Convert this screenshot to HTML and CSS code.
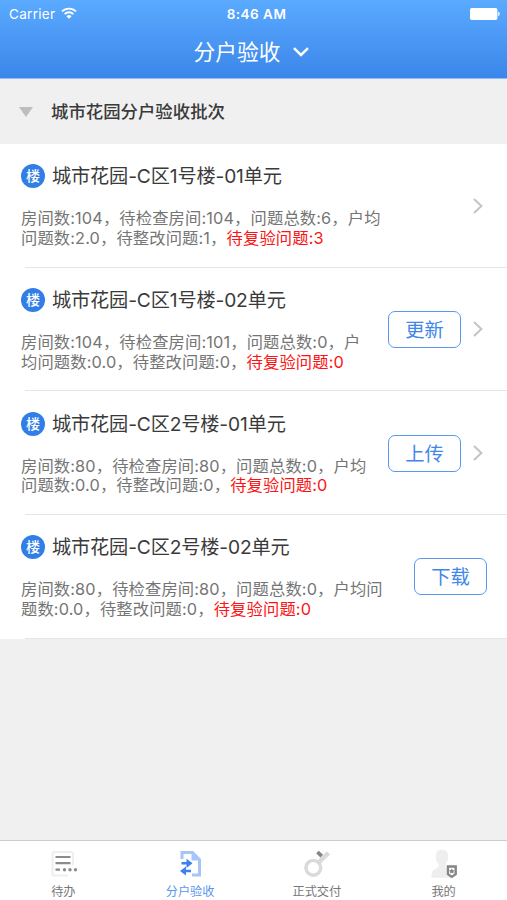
FILE: index.html
```html
<!DOCTYPE html>
<html lang="zh-CN">
<head>
  <meta charset="UTF-8" />
  <meta name="viewport" content="width=device-width, initial-scale=1.0" />
  <title>分户验收</title>
  <link rel="stylesheet" href="styles.css">
</head>
<body>
  <header class="header">
    <div class="status-bar">
      <div class="carrier">
        <span>Carrier</span>
        <svg class="wifi" width="16" height="12" viewBox="0 0 16 12" fill="none" stroke="#fff" stroke-width="1.8">
          <path d="M1 4.4a10 10 0 0 1 14 0" />
          <path d="M3.6 7.1a6.2 6.2 0 0 1 8.8 0" />
          <path d="M8 11.8L5.4 9.2a3.7 3.7 0 0 1 5.2 0z" fill="#fff" stroke="none" />
        </svg>
      </div>
      <span class="time">8:46 AM</span>
      <div class="battery">
        <svg width="30" height="12" viewBox="0 0 30 12" fill="#fff">
          <rect x="0" y="0" width="27.4" height="12" rx="1.8" />
          <path d="M28.2 3.8c2 .6 2 3.8 0 4.4z" />
        </svg>
      </div>
    </div>
    <div class="nav-bar">
      <h1>分户验收</h1>
      <svg width="16" height="10" viewBox="0 0 16 10" fill="none" stroke="#fff" stroke-width="2.5">
        <path d="M1 1.2L8 8l7-6.8" />
      </svg>
    </div>
  </header>

  <main>
    <div class="group">
      <span class="triangle"></span>
      <h2>城市花园分户验收批次</h2>
    </div>

    <ul class="list">
      <li class="item">
        <div class="info">
          <h3><span class="badge">楼</span>城市花园-C区1号楼-01单元</h3>
          <p>房间数:104，待检查房间:104，问题总数:6，户均<br>问题数:2.0，待整改问题:1，<span class="red">待复验问题:3</span></p>
        </div>
        <svg class="arrow" width="10" height="16" viewBox="0 0 10 16"><path d="M1 1l7.4 7L1 15" /></svg>
      </li>
      <li class="item">
        <div class="info">
          <h3><span class="badge">楼</span>城市花园-C区1号楼-02单元</h3>
          <p>房间数:104，待检查房间:101，问题总数:0，户<br>均问题数:0.0，待整改问题:0，<span class="red">待复验问题:0</span></p>
        </div>
        <button type="button" class="btn">更新</button>
        <svg class="arrow" width="10" height="16" viewBox="0 0 10 16"><path d="M1 1l7.4 7L1 15" /></svg>
      </li>
      <li class="item">
        <div class="info">
          <h3><span class="badge">楼</span>城市花园-C区2号楼-01单元</h3>
          <p>房间数:80，待检查房间:80，问题总数:0，户均<br>问题数:0.0，待整改问题:0，<span class="red">待复验问题:0</span></p>
        </div>
        <button type="button" class="btn">上传</button>
        <svg class="arrow" width="10" height="16" viewBox="0 0 10 16"><path d="M1 1l7.4 7L1 15" /></svg>
      </li>
      <li class="item last">
        <div class="info">
          <h3><span class="badge">楼</span>城市花园-C区2号楼-02单元</h3>
          <p>房间数:80，待检查房间:80，问题总数:0，户均问<br>题数:0.0，待整改问题:0，<span class="red">待复验问题:0</span></p>
        </div>
        <button type="button" class="btn">下载</button>
      </li>
    </ul>
  </main>

  <nav class="tab-bar">
    <a class="tab">
      <svg width="30" height="30" viewBox="0 0 30 30" fill="none">
        <path d="M20 26.5H6.5a2 2 0 0 1-2-2V5a2 2 0 0 1 2-2H23a2 2 0 0 1 2 2v11.5" stroke="#efefef" stroke-width="2.2" />
        <path d="M7.5 8h15M7.5 14.2h15M7.5 20.7h4.5" stroke="#8c8c8c" stroke-width="2.2" />
        <g fill="#8c8c8c"><circle cx="16.5" cy="20.7" r="1.7" /><circle cx="22" cy="20.7" r="1.7" /><circle cx="27.5" cy="20.7" r="1.7" /></g>
      </svg>
      <span>待办</span>
    </a>
    <a class="tab active">
      <svg width="30" height="30" viewBox="0 0 30 30" fill="none">
        <path d="M7 10V3.500h10.500l7 7V26h-7.500" stroke="#a8c5f8" stroke-width="3" />
        <path d="M16.5 2.500v9h9z" fill="#a8c5f8" />
        <path d="M6.500 14.300h6.500M16 22H9.500" stroke="#3d7fee" stroke-width="2.6" />
        <path d="M11.500 9.700l6 4.600-6 4.600zM11 17.400l-6 4.600 6 4.600z" fill="#3d7fee" />
      </svg>
      <span>分户验收</span>
    </a>
    <a class="tab">
      <svg width="30" height="30" viewBox="0 0 30 30" fill="none">
        <circle cx="11.300" cy="18.800" r="7.4" stroke="#dadada" stroke-width="3.4" />
        <path d="M16.500 13.500L26.500 3.800" stroke="#dadada" stroke-width="4.500" />
        <path d="M15.500 3l4.200 4.200" stroke="#858585" stroke-width="3.8" />
      </svg>
      <span>正式交付</span>
    </a>
    <a class="tab">
      <svg width="30" height="30" viewBox="0 0 30 30" fill="none">
        <path d="M13 .5c4 0 6.300 2.800 6.300 7 0 3.800-1.400 6.200-2.800 7.500v3.200c3.500 1.500 6.500 3 6.500 6.500v4H2.500v-2.500c0-4.500 3-6 7-8v-3.200C8 13.700 6.800 11.300 6.800 7.500c0-4.200 2.300-7 6.200-7z" fill="#eee" />
        <path d="M17 16h12v9.500l-6 4-6-4z" fill="#fff" />
        <path d="M18.900 17.500h7.800v7.700l-3.900 2.700-3.900-2.700z" fill="#fff" stroke="#858585" stroke-width="2.4" />
        <path d="M22.800 19.400l.9 1.700 1.900.3-1.300 1.300.3 1.900-1.800-.9-1.800.9.300-1.900-1.300-1.300 1.900-.3z" fill="#858585" />
      </svg>
      <span>我的</span>
    </a>
  </nav>
</body>
</html>
```
FILE: styles.css
```css
* {
  box-sizing: border-box;
}

body {
  margin: 0;
  font-family: Inter, "Noto Sans CJK SC", sans-serif;
  background: #f0f0f0;
  height: 100vh;
  display: flex;
  flex-direction: column;
  overflow: hidden;
}

h1, h2, h3, p, ul {
  margin: 0;
  padding: 0;
}

main {
  flex: 1;
}

.header {
  height: 79px;
  background: linear-gradient(#5aaaff, #3b86ea);
  border-bottom: 1px solid #8dbcf8;
  color: #fff;
}

.status-bar {
  height: 28px;
  padding: 0 7px 0 9px;
  display: flex;
  align-items: center;
  font-size: 13.5px;
}

.carrier,
.battery {
  flex: 1;
  display: flex;
  align-items: center;
}

.carrier {
  gap: 6px;
  letter-spacing: 0.3px;
}

.wifi {
  margin-top: -3px;
}

.time {
  padding-left: 4px;
  font-weight: 600;
  letter-spacing: 0.5px;
}

.battery {
  justify-content: flex-end;
}

.nav-bar {
  height: 48px;
  padding-right: 4px;
  display: flex;
  align-items: center;
  justify-content: center;
  gap: 13px;
}

.nav-bar h1 {
  font-size: 21.7px;
  font-weight: 400;
  line-height: 30px;
}

.group {
  height: 65px;
  display: flex;
  align-items: center;
  gap: 18px;
  padding-left: 19px;
}

.triangle {
  border-left: 7.5px solid transparent;
  border-right: 7.5px solid transparent;
  border-top: 10px solid #bdbdbd;
}

.group h2 {
  font-size: 17.4px;
  font-weight: 500;
  line-height: 26px;
  color: #3a3a3a;
}

.list {
  list-style: none;
  background: #fff;
}

.item {
  height: 123.67px;
  padding: 0 24px 0 21px;
  display: flex;
  align-items: center;
  background: linear-gradient(#e5e5e5, #e5e5e5) no-repeat 25px 100% / 100% 1px;
}

.item.last {
  padding-right: 20px;
}

.info {
  flex: 1;
  align-self: flex-start;
  padding-top: 19.4px;
  white-space: nowrap;
}

.info h3 {
  display: flex;
  align-items: center;
  gap: 7px;
  font-size: 19.2px;
  font-weight: 400;
  line-height: 26px;
  letter-spacing: -0.15px;
  color: #3a3a3a;
}

.badge {
  width: 24px;
  height: 24px;
  border-radius: 50%;
  background: #317fe6;
  color: #fff;
  font-size: 14px;
  font-weight: 500;
  line-height: 23px;
  text-align: center;
}

.info p {
  margin-top: 20px;
  font-size: 16.3px;
  line-height: 19.5px;
  letter-spacing: 0.14px;
  color: #757575;
}

.info .red {
  color: #fb1414;
}

.btn {
  width: 73px;
  height: 37px;
  padding: 0 0 1px;
  border: 1.5px solid #5a98ef;
  border-radius: 7px;
  background: #fff;
  color: #4187ea;
  font-family: inherit;
  font-size: 19.3px;
}

.arrow {
  margin-left: 12px;
  fill: none;
  stroke: #c4c4c4;
  stroke-width: 2;
}

.tab-bar {
  height: 60px;
  border-top: 1px solid #ccc;
  background: #fff;
  display: flex;
}

.tab {
  flex: 1;
  display: flex;
  flex-direction: column;
  align-items: center;
  padding-top: 8px;
  font-size: 12.2px;
  line-height: 18px;
  color: #777;
}

.tab svg {
  flex: none;
}

.tab span {
  margin-top: 4px;
}

.tab.active {
  color: #5c95f0;
}
```
